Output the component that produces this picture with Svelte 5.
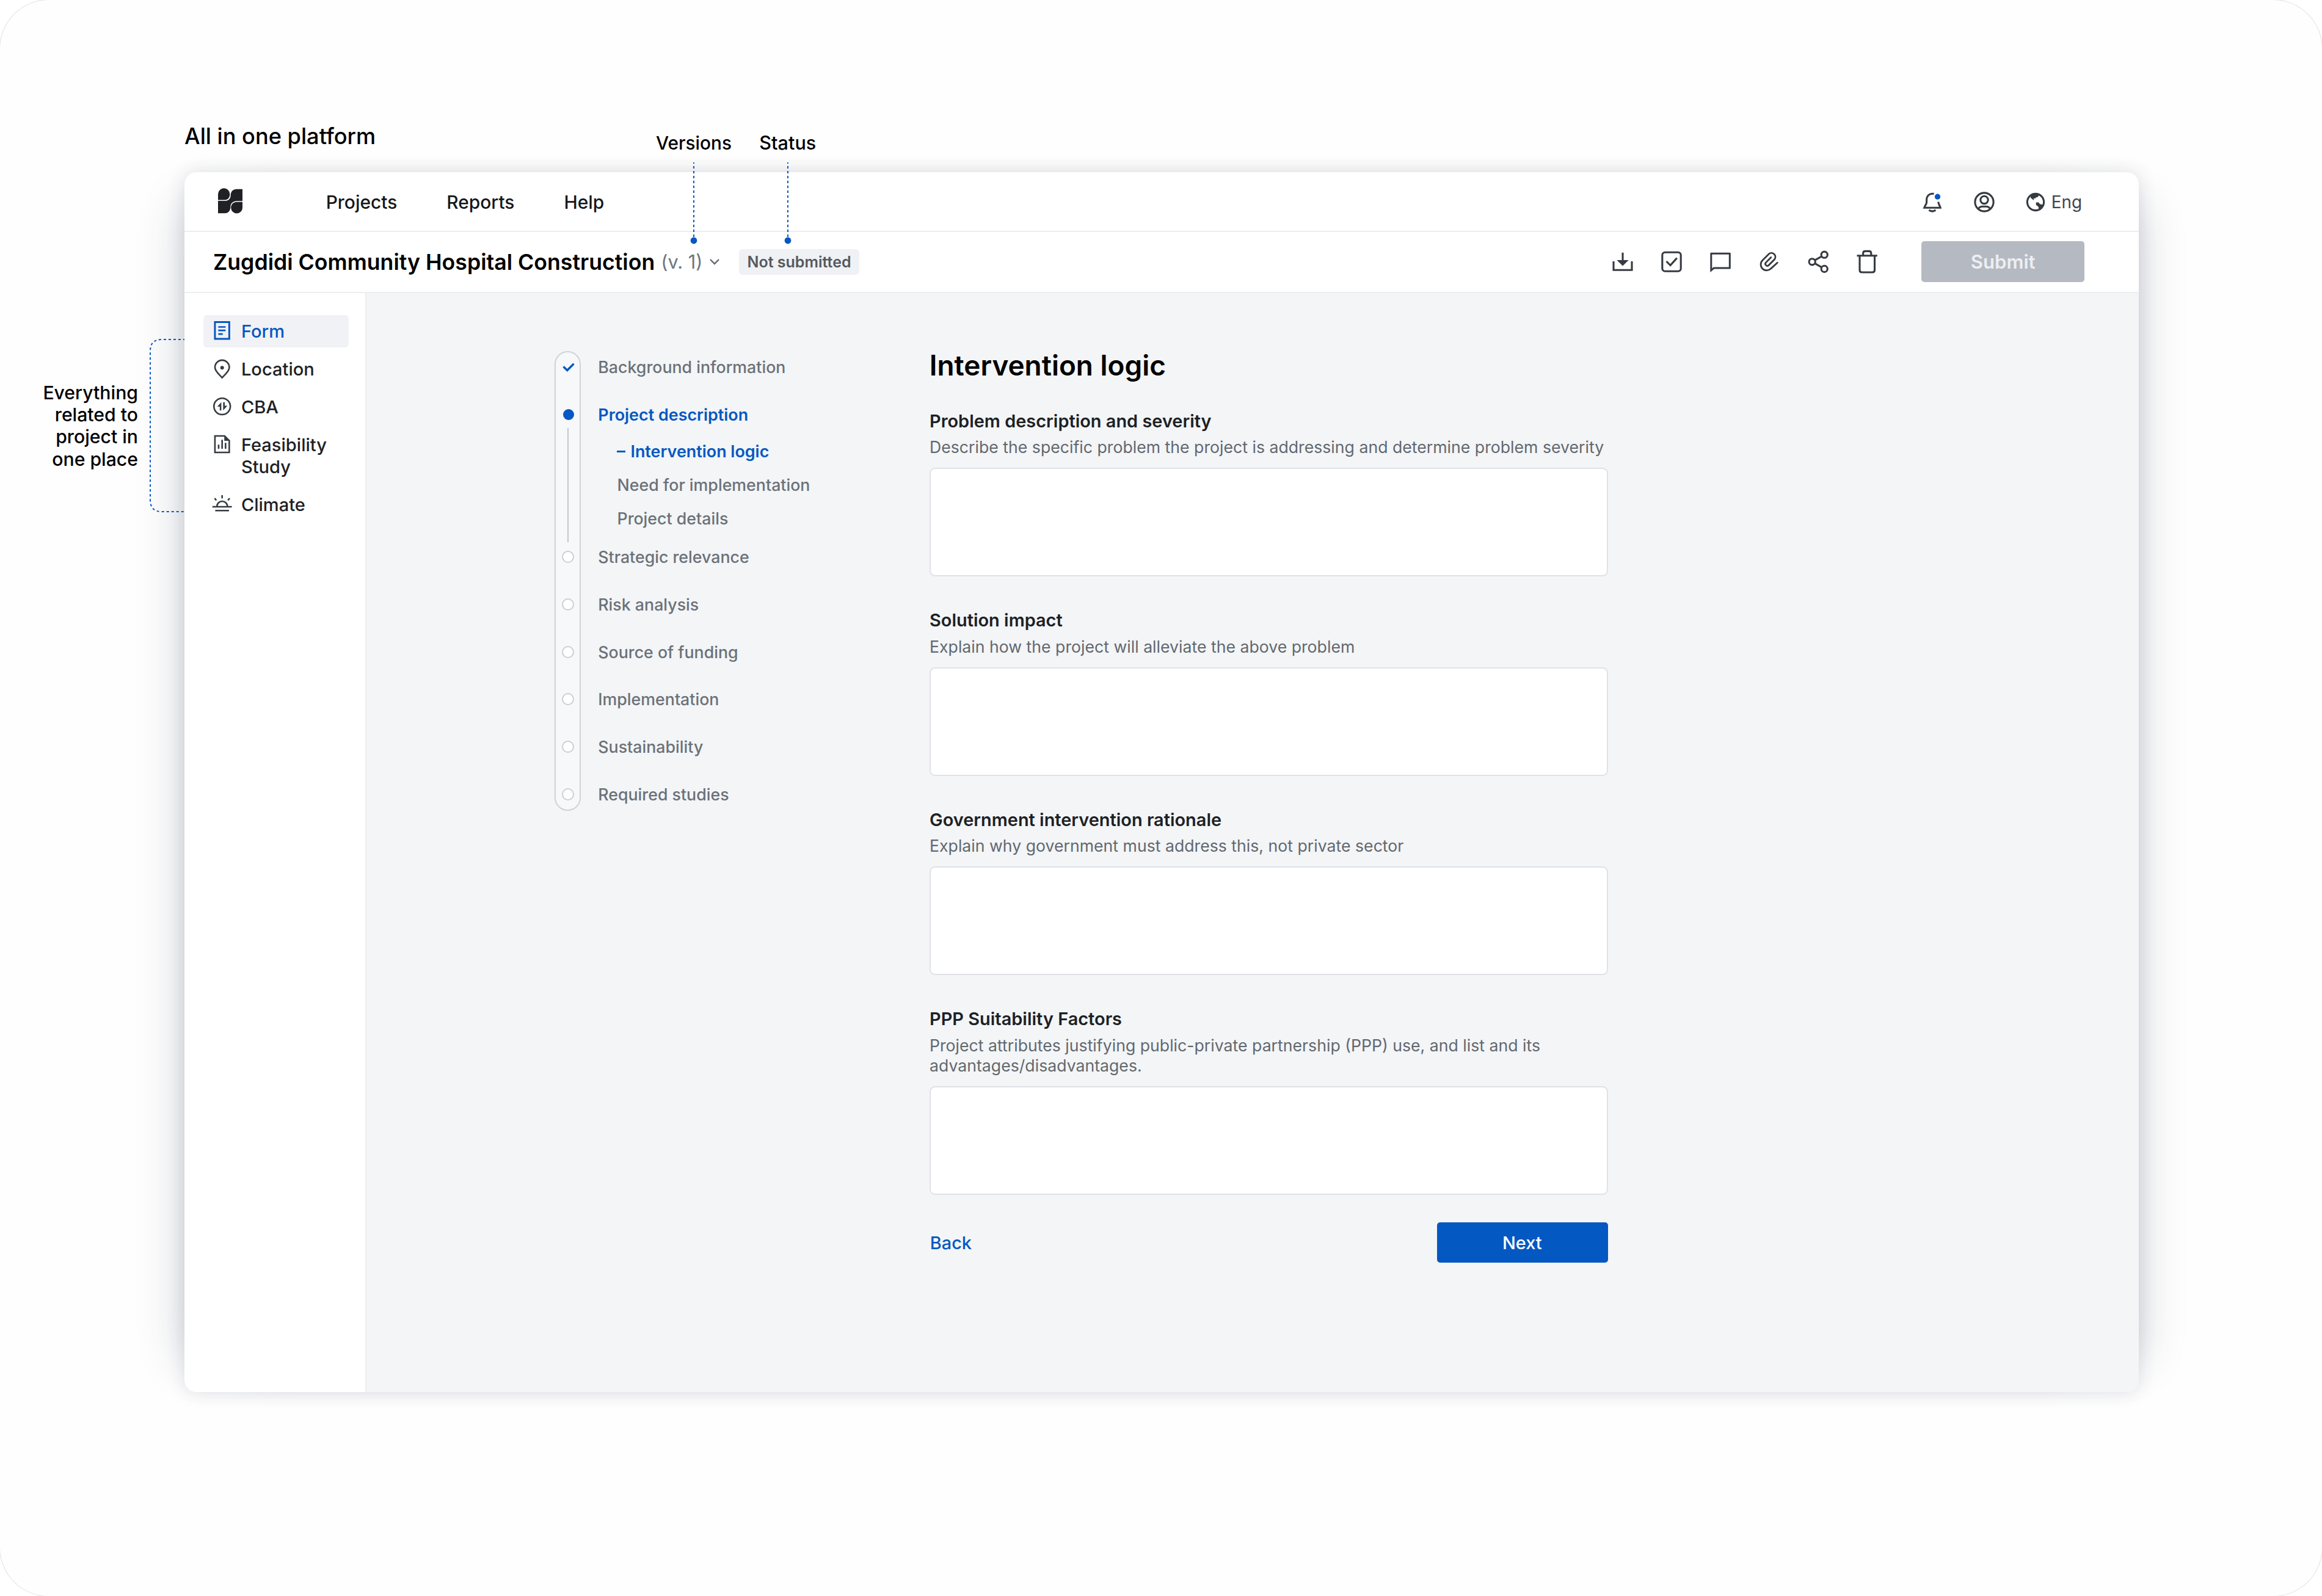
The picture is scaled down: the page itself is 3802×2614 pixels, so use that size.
<script lang="ts">
  type Step = { title: string; state: 'done' | 'current' | 'todo'; children?: string[] };

  const navLinks = ['Projects', 'Reports', 'Help'];

  const sections = [
    { id: 'form', label: 'Form' },
    { id: 'location', label: 'Location' },
    { id: 'cba', label: 'CBA' },
    { id: 'study', label: 'Feasibility Study' },
    { id: 'climate', label: 'Climate' }
  ];

  const tools = ['download', 'check', 'comment', 'attach', 'share', 'delete'];

  const steps: Step[] = [
    { title: 'Background information', state: 'done' },
    {
      title: 'Project description',
      state: 'current',
      children: ['Intervention logic', 'Need for implementation', 'Project details']
    },
    { title: 'Strategic relevance', state: 'todo' },
    { title: 'Risk analysis', state: 'todo' },
    { title: 'Source of funding', state: 'todo' },
    { title: 'Implementation', state: 'todo' },
    { title: 'Sustainability', state: 'todo' },
    { title: 'Required studies', state: 'todo' }
  ];

  const fields = [
    {
      label: 'Problem description and severity',
      hint: 'Describe the specific problem the project is addressing and determine problem severity'
    },
    {
      label: 'Solution impact',
      hint: 'Explain how the project will alleviate the above problem'
    },
    {
      label: 'Government intervention rationale',
      hint: 'Explain why government must address this, not private sector'
    },
    {
      label: 'PPP Suitability Factors',
      hint: 'Project attributes justifying public-private partnership (PPP) use, and list and its advantages/disadvantages.'
    }
  ];

  let activeSection = $state('form');
  let activeChild = $state('Intervention logic');
</script>

<div class="page">
  <h1 class="page-title">All in one platform</h1>

  <div class="window">
    <header class="topbar">
      <svg class="logo" viewBox="0 0 40 42" aria-hidden="true">
        <path d="M0 19.5V10A9.7 9.7 0 0 1 19.4 10C19.4 15.5 16 19.5 11 19.5z" />
        <path d="M0 21H12C17 21 20.7 17 20.7 12C20.7 5 25 1.7 30.5 1.7H40V21.3H30.5C25 21.3 20.4 25 20.4 30.5C20.4 37 17 41.3 11.5 41.3H0z" />
        <path d="M40 22.7V32.2A9.4 9.4 0 0 1 21.2 32.2C21.2 26.5 25.5 22.7 30.5 22.7z" />
      </svg>

      <nav class="main-nav">
        {#each navLinks as link}
          <a href="#{link.toLowerCase()}">{link}</a>
        {/each}
      </nav>

      <div class="account">
        <svg class="icon" viewBox="0 0 40 40" aria-label="Notifications">
          <path d="M22.5 6.4C14.5 5.4 10.6 10.3 10.6 16.5V20.5C10.6 23 8.2 25 6.8 29.2H33.2C32.6 26.5 29.9 23.8 29.8 19.5" />
          <path d="M14.4 33Q20 37.2 25.4 33" />
          <circle class="dot" cx="28.5" cy="11.2" r="4.6" />
        </svg>
        <svg class="icon" viewBox="0 0 40 40" aria-label="Account">
          <circle cx="20" cy="20" r="15.1" />
          <circle cx="20" cy="16.4" r="6.2" />
          <path d="M10.6 31C12 27.6 14.5 27.2 17 27.2H23C25.5 27.2 28 27.6 29.4 31" />
        </svg>
        <div class="language">
          <svg class="icon" viewBox="0 0 40 40" aria-hidden="true">
            <circle cx="20" cy="20" r="13.6" />
            <path class="solid" d="M12 10.5L16.7 6.2H24L25.2 9.5L23.2 12L20.7 12.2L19.5 14L17 13.8L17.3 17L14 14.8L12 13z" />
            <path class="solid" d="M20.7 20.5L25 20.6L27 23.3L32 24.3L30.5 28.5L27.5 31.5L24.8 32.5L25 28L20.7 24.5z" />
          </svg>
          <span>Eng</span>
        </div>
      </div>
    </header>

    <div class="project-bar">
      <h2>Zugdidi Community Hospital Construction</h2>
      <button class="version" type="button">
        (v. 1)
        <svg viewBox="0 0 18 12" aria-hidden="true"><path d="M2 2L9 9L16 2" /></svg>
      </button>
      <span class="badge">Not submitted</span>

      <div class="tools">
        {#each tools as tool}
          <svg class="icon" viewBox="0 0 40 40" aria-label={tool}>
            {#if tool === 'download'}
              <path d="M20 4.8V19" />
              <path class="solid" d="M10.3 17H29.7L20 26.6z" />
              <path d="M5 19V33.3H35V19" />
            {:else if tool === 'check'}
              <rect x="4.8" y="4.2" width="30.4" height="31" rx="4.5" />
              <path d="M11.5 19L18 25.6L28.8 13.6" />
            {:else if tool === 'comment'}
              <path
                class="solid"
                fill-rule="evenodd"
                d="M3.3 6Q3.3 4.8 4.5 4.8H35.5Q36.8 4.8 36.8 6V30.3Q36.8 31.5 35.5 31.5H9.8L3.3 37zM6.3 7.8V30.6L8.8 28.5H33.8V7.8z"
              />
            {:else if tool === 'attach'}
              <path
                class="thin"
                d="M33.3 21.3L22.5 31.1A9.6 9.6 0 0 1 9 17.2L19.5 6.7A6.5 6.5 0 0 1 28.6 15.8L18.8 25.6A3.2 3.2 0 0 1 14.3 21.1L22.8 12.6"
              />
            {:else if tool === 'share'}
              <circle cx="10.2" cy="19.8" r="5.1" />
              <circle cx="30.2" cy="8.2" r="5.1" />
              <circle cx="30.2" cy="31.4" r="5.1" />
              <path d="M14.6 17.2L25.8 10.8M14.6 22.4L25.8 28.8" />
            {:else}
              <path d="M3.5 9.8H36.8M8 10V33.3Q8 37 11.7 37H28.8Q32.5 37 32.5 33.3V10M13.6 9V6Q13.6 2.4 17 2.4H23.4Q26.8 2.4 26.8 6V9" />
            {/if}
          </svg>
        {/each}
      </div>

      <button class="submit" type="button" disabled>Submit</button>
    </div>

    <div class="workspace">
      <aside class="sidebar">
        {#each sections as section}
          <button
            class="section"
            class:active={activeSection === section.id}
            type="button"
            onclick={() => (activeSection = section.id)}
          >
            <svg class="section-icon" viewBox="0 0 36 36" aria-hidden="true">
              {#if section.id === 'form'}
                <path class="bold" d="M6 2.6H29.7V30.4H6z" />
                <path d="M11.5 10.6H23.6M11.5 16.3H23.6M11.5 22.4H19" />
              {:else if section.id === 'location'}
                <path d="M17.9 32C13 26.5 6 21 6 14.8A11.9 11.9 0 0 1 29.8 14.8C29.8 21 22.8 26.5 17.9 32z" />
                <circle class="solid" cx="17.9" cy="15.4" r="3" />
              {:else if section.id === 'cba'}
                <circle cx="17.9" cy="16.8" r="13.6" />
                <path class="solid" d="M16.6 9.8V23.4H14V17.3H9.8zM19.6 9.8H22.2V15.8H26.6L19.6 23.6z" />
              {:else if section.id === 'study'}
                <path d="M6 3.1H22L29.7 10.8V30.3H6z" />
                <path class="solid" d="M21.5 1.8V11.2H31z" />
                <path d="M12.1 17.4V24.4M17.9 9.4V24.4M23.6 14.4V24.4" />
              {:else}
                <path d="M1.8 21.3H34M6.5 27.6H29.3M9.3 20.8A8.7 8.7 0 0 1 26.7 20.8M17.9 2V7.3M5.4 7.2L8.4 10.6M30.4 7.2L27.4 10.6" />
              {/if}
            </svg>
            <span>{section.label}</span>
          </button>
        {/each}
      </aside>

      <main class="content">
        <ol class="stepper">
          {#each steps as step}
            <li class="step {step.state}">
              <div class="marker">
                {#if step.state === 'done'}
                  <svg class="tick" viewBox="0 0 20 15" aria-hidden="true"><path d="M1.5 6.5L7.8 12.5L18.5 1.8" /></svg>
                {:else}
                  <span class="bullet"></span>
                {/if}
              </div>
              <div class="step-body">
                <span class="step-title">{step.title}</span>
                {#if step.children}
                  <ul class="substeps">
                    {#each step.children as child}
                      <li class:active={activeChild === child}>
                        {#if activeChild === child}<i class="dash"></i>{/if}{child}
                      </li>
                    {/each}
                  </ul>
                {/if}
              </div>
            </li>
          {/each}
        </ol>

        <form class="form">
          <h3>Intervention logic</h3>
          {#each fields as field}
            <label class="field">
              <span class="field-label">{field.label}</span>
              <span class="field-hint">{field.hint}</span>
              <textarea></textarea>
            </label>
          {/each}
          <div class="actions">
            <a class="back" href="#back">Back</a>
            <button class="next" type="button">Next</button>
          </div>
        </form>
      </main>
    </div>
  </div>

  <!-- callouts drawn over the product window -->
  <span class="callout versions">Versions</span>
  <span class="callout status">Status</span>
  {#each ['versions', 'status'] as name}
    <svg class="pin pin-{name}" viewBox="0 0 12 134" aria-hidden="true">
      <path d="M6 0V128" />
      <circle cx="6" cy="128" r="5.4" />
    </svg>
  {/each}

  <p class="callout everything">Everything<br />related to<br />project in<br />one place</p>
  <svg class="bracket" viewBox="0 0 57 284" aria-hidden="true">
    <path d="M57 1H20Q1 1 1 20V264Q1 283 20 283H57" />
  </svg>
</div>

<style>
  :global(body) {
    background: #fff;
    overflow: hidden;
  }

  .page {
    --blue: #0458c2;
    --ink: #1d2125;
    --icon: #363b41;
    --muted: #6b7178;
    background: #fefefe;
    border-radius: 80px;
    box-shadow: 0 0 0 1px #e2e2e2;
    box-sizing: border-box;
    font-family: Inter, sans-serif;
    height: 2614px;
    padding: 200px 300px 0 302px;
    position: relative;
    width: 3802px;
  }

  .page :global(*),
  .stepper::before {
    box-sizing: border-box;
  }

  button {
    background: none;
    border: 0;
    font: inherit;
    padding: 0;
  }

  a {
    color: inherit;
    text-decoration: none;
  }

  .page-title {
    color: #000;
    font-size: 36.2px;
    font-weight: 500;
    line-height: 46px;
    margin: 0 0 36px;
  }

  .window {
    background: #fff;
    border-radius: 20px;
    box-shadow:
      0 0 30px rgba(40, 50, 80, 0.14),
      -56px 0 70px -52px rgba(40, 50, 80, 0.2),
      56px 0 70px -52px rgba(40, 50, 80, 0.2);
    display: flex;
    flex-direction: column;
    height: 1998px;
    width: 3200px;
  }

  .topbar,
  .project-bar {
    align-items: center;
    border-bottom: 2px solid #eceef0;
    display: flex;
    flex: none;
  }

  .topbar {
    height: 97.5px;
    padding: 0 93px 0 54.7px;
  }

  .logo {
    fill: #1f2124;
    height: 42px;
    margin-top: -1px;
    width: 40px;
  }

  .main-nav {
    color: #15181b;
    display: flex;
    font-size: 29.9px;
    font-weight: 500;
    gap: 81px;
    line-height: 36px;
    margin: 3px 0 0 137px;
  }

  .account {
    align-items: center;
    display: flex;
    gap: 44.4px;
    margin: 2px 0 0 auto;
  }

  .icon {
    fill: none;
    height: 40px;
    stroke: var(--icon);
    stroke-width: 3.1;
    width: 40px;
  }

  .icon .dot {
    fill: var(--blue);
    stroke: none;
  }

  .icon .solid {
    fill: var(--icon);
    stroke: none;
  }

  .icon .thin {
    stroke-linecap: round;
    stroke-width: 2.8;
  }

  .language {
    align-items: center;
    color: #41464d;
    display: flex;
    font-size: 27.9px;
    gap: 5.5px;
    line-height: 36px;
  }

  .language span {
    padding-top: 1px;
  }

  .project-bar {
    height: 100px;
    padding: 0 89px 0 47px;
  }

  .project-bar h2 {
    color: #000;
    font-size: 35.66px;
    font-weight: 600;
    line-height: 44px;
    margin: 0;
    white-space: nowrap;
  }

  .version {
    align-items: center;
    color: #6f757c;
    display: flex;
    font-size: 30.7px;
    gap: 11px;
    margin-left: 10px;
    white-space: nowrap;
  }

  .version svg {
    fill: none;
    height: 12px;
    stroke: #60666d;
    stroke-width: 2.4;
    width: 18px;
  }

  .badge {
    background: #eff1f4;
    border-radius: 6px;
    color: #55595f;
    font-size: 25px;
    font-weight: 600;
    line-height: 42px;
    margin-left: 31px;
    padding: 0 13px;
    white-space: nowrap;
  }

  .tools {
    display: flex;
    gap: 40px;
    margin-left: auto;
  }

  .submit {
    background: #b5b9c2;
    border-radius: 5px;
    color: #eceff2;
    font-size: 31.1px;
    font-weight: 600;
    height: 66.7px;
    margin-left: 69.2px;
    width: 266.6px;
  }

  .workspace {
    display: flex;
    flex: 1;
    min-height: 0;
  }

  .sidebar {
    border-right: 2px solid #eceef1;
    display: flex;
    flex: none;
    flex-direction: column;
    gap: 8.9px;
    padding: 36.2px 27px 0 31.2px;
    width: 298px;
  }

  .section {
    align-items: flex-start;
    border-radius: 6px;
    color: var(--ink);
    display: flex;
    font-size: 29.1px;
    font-weight: 500;
    gap: 12.8px;
    line-height: 35.6px;
    padding: 8.85px 13.3px;
    text-align: left;
  }

  .section.active {
    background: #f1f2f5;
    color: var(--blue);
  }

  .section-icon {
    fill: none;
    flex: none;
    height: 35.6px;
    stroke: var(--icon);
    stroke-width: 2.6;
    width: 35.6px;
  }

  .section-icon .bold {
    stroke-width: 3;
  }

  .section-icon .solid {
    fill: var(--icon);
    stroke: none;
  }

  .section.active .section-icon {
    stroke: var(--blue);
  }

  .content {
    background: #f3f5f7;
    border-radius: 0 0 20px;
    display: flex;
    flex: 1;
    padding: 92.5px 0 0 308.3px;
  }

  .stepper {
    align-self: flex-start;
    list-style: none;
    margin: 15px 0 0;
    padding: 0;
    position: relative;
    width: 614px;
  }

  /* rounded track behind the step markers */
  .stepper::before {
    background: #f7f8fa;
    border: 2px solid #cdd4da;
    border-radius: 22px;
    content: '';
    inset: -12.4px auto -13px 0;
    position: absolute;
    width: 42.7px;
  }

  .step {
    color: var(--muted);
    display: flex;
    font-size: 26.75px;
    font-weight: 500;
    height: 77.75px;
    line-height: 28px;
    position: relative;
  }

  .step:last-child {
    height: 28px;
  }

  .marker {
    align-items: center;
    display: flex;
    flex: none;
    flex-direction: column;
    width: 42.7px;
  }

  .tick {
    fill: none;
    height: 15px;
    margin: 6.5px 0 0 3px;
    stroke: var(--blue);
    stroke-width: 3.4;
    width: 20px;
  }

  .bullet {
    background: #fff;
    border: 2.5px solid #c9d0d7;
    border-radius: 50%;
    height: 20px;
    margin-top: 4px;
    width: 20px;
  }

  .step.current {
    height: 233.4px;
  }

  .current .bullet {
    background: var(--blue);
    border: 0;
    height: 18px;
    margin: 5px 0 0 2px;
    width: 18px;
  }

  .current .marker::after {
    background: #c2c6cb;
    content: '';
    height: 187px;
    margin-top: 13.5px;
    width: 2px;
  }

  .step-body {
    padding-left: 28.3px;
  }

  .current .step-title,
  .substeps .active {
    color: var(--blue);
    font-weight: 600;
  }

  .current .step-title,
  .substeps .active {
    font-size: 26.9px;
  }

  .substeps {
    display: flex;
    flex-direction: column;
    gap: 27.4px;
    list-style: none;
    margin: 31.8px 0 0;
    padding: 0 0 0 31.2px;
  }

  .substeps li {
    align-items: center;
    display: flex;
    white-space: nowrap;
  }

  .dash {
    background: var(--blue);
    height: 2.4px;
    margin: 2px 8px 0 0;
    width: 14px;
  }

  .form {
    display: flex;
    flex-direction: column;
    width: 1110.5px;
  }

  .form h3 {
    color: #000;
    font-size: 45.9px;
    font-weight: 600;
    line-height: 53px;
    margin: 0 0 46.7px -0.5px;
  }

  .field {
    display: flex;
    flex-direction: column;
    margin-bottom: 53.9px;
  }

  .field:last-of-type {
    margin-bottom: 44.4px;
  }

  .field-label {
    color: var(--ink);
    font-size: 28.93px;
    font-weight: 600;
    line-height: 36px;
    margin: 0 0 8.6px -0.3px;
  }

  .field-hint {
    color: #62686f;
    font-size: 26.67px;
    line-height: 33.6px;
    margin: 0 0 16.6px -0.3px;
  }

  textarea {
    background: #fff;
    border: 2px solid #dfe2e6;
    border-radius: 9px;
    display: block;
    height: 177.8px;
    resize: none;
    width: 100%;
  }

  .actions {
    align-items: center;
    display: flex;
    font-size: 28.9px;
    font-weight: 500;
    justify-content: space-between;
  }

  .back {
    color: var(--blue);
    padding: 1.5px 0 0 0.5px;
  }

  .next {
    background: var(--blue);
    border-radius: 5px;
    color: #fff;
    height: 66.7px;
    padding: 1.5px 1px 0 0;
    width: 280px;
  }

  .callout {
    color: #000;
    font-size: 30.2px;
    font-weight: 500;
    line-height: 36.1px;
    margin: 0;
    position: absolute;
    white-space: nowrap;
  }

  .versions {
    font-size: 29.8px;
    left: 1074px;
    top: 215.5px;
  }

  .status {
    font-size: 30.6px;
    left: 1243.3px;
    top: 215.5px;
  }

  .everything {
    right: 3576px;
    text-align: right;
    top: 625.3px;
  }

  .pin {
    height: 134px;
    position: absolute;
    top: 266px;
    width: 12px;
  }

  .pin-versions {
    left: 1130px;
  }

  .pin-status {
    left: 1284px;
  }

  .pin path,
  .bracket path {
    fill: none;
    stroke: var(--blue);
    stroke-dasharray: 4 4;
    stroke-dashoffset: 2;
    stroke-width: 2;
  }

  .pin circle {
    fill: var(--blue);
  }

  .bracket {
    height: 284px;
    left: 245px;
    position: absolute;
    top: 555px;
    width: 57px;
  }
</style>
